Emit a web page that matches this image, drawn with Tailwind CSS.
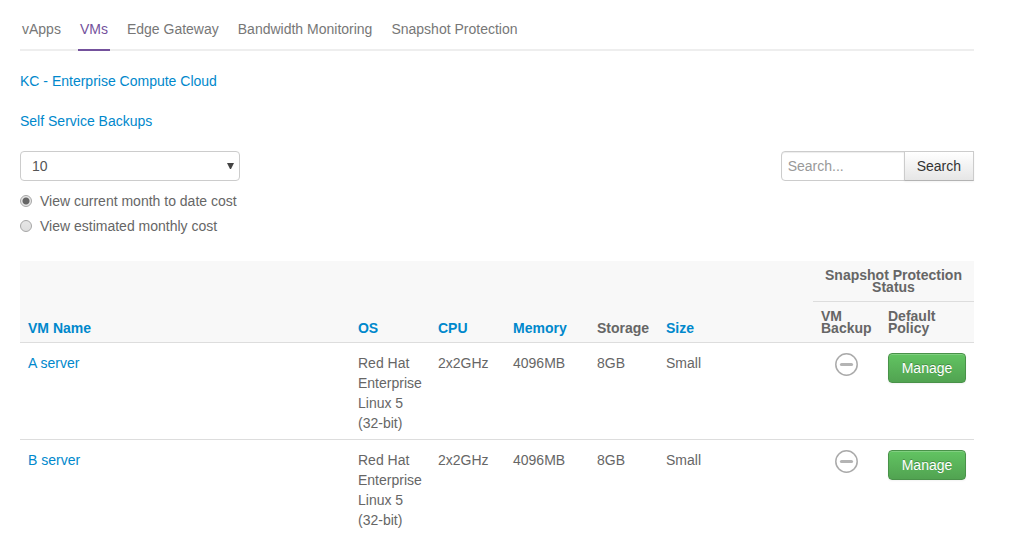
<!DOCTYPE html>
<html lang="en">
<head>
<meta charset="utf-8">
<meta name="viewport" content="width=device-width, initial-scale=1">
<title>VMs</title>
<script src="https://cdn.jsdelivr.net/npm/@tailwindcss/browser@4"></script>
</head>
<body class="bg-white pl-5 pr-[37px] font-['Liberation_Sans',Arial,sans-serif] text-[14px] leading-5 text-[#666]">
  <nav class="mt-[19px] flex gap-[15px] border-b-2 border-[#eee] text-[#777]">
    <a href="#" class="-mb-0.5 border-b-2 border-transparent px-0.5 pb-2.5">vApps</a>
    <a href="#" aria-current="page" class="-mb-0.5 border-b-2 border-[#74519c] px-0.5 pb-2.5 text-[#74519c]">VMs</a>
    <a href="#" class="-mb-0.5 border-b-2 border-transparent px-0.5 pb-2.5">Edge Gateway</a>
    <a href="#" class="-mb-0.5 border-b-2 border-transparent px-0.5 pb-2.5">Bandwidth Monitoring</a>
    <a href="#" class="-mb-0.5 border-b-2 border-transparent px-0.5 pb-2.5">Snapshot Protection</a>
  </nav>

  <main>
    <p class="mt-5"><a href="#" class="text-[#0088cc]">KC - Enterprise Compute Cloud</a></p>
    <p class="mt-5"><a href="#" class="text-[#0088cc]">Self Service Backups</a></p>

    <div class="mt-5 flex items-start justify-between">
      <div class="relative w-[220px]">
        <select aria-label="Rows per page" class="block h-[30px] w-full appearance-none rounded border border-[#ccc] bg-white px-[11px] text-[#555]">
          <option>10</option>
          <option>25</option>
          <option>50</option>
        </select>
        <svg class="pointer-events-none absolute top-3 right-1.5 h-1.5 w-[7px]" viewBox="0 0 7 6" fill="#444" aria-hidden="true"><path d="M0 0H7L4 6H3Z"/></svg>
      </div>
      <form class="flex">
        <input type="text" aria-label="Search" placeholder="Search..." class="h-[30px] w-[124px] rounded-l border border-[#ccc] bg-white px-1.5 text-[#555] shadow-[inset_0_1px_1px_rgba(0,0,0,0.075)] placeholder:text-[#999]">
        <button type="button" class="-ml-px h-[30px] border border-[#ccc] border-b-[#b3b3b3] bg-linear-to-b from-white to-[#e6e6e6] px-3 text-[#333] shadow-[inset_0_1px_0_rgba(255,255,255,0.2),0_1px_2px_rgba(0,0,0,0.05)]">Search</button>
      </form>
    </div>

    <div class="mt-2.5 flex flex-col items-start gap-[5px]">
      <label class="flex items-center gap-2">
        <input type="radio" name="cost" checked class="size-3 appearance-none rounded-full border border-[#a6a6a6] bg-linear-to-b from-[#e6e6e6] to-[#dedede] checked:bg-[radial-gradient(circle,#666_2px,#666_3px,#e6e6e6_4px)]">
        View current month to date cost
      </label>
      <label class="flex items-center gap-2">
        <input type="radio" name="cost" class="size-3 appearance-none rounded-full border border-[#a6a6a6] bg-linear-to-b from-[#e6e6e6] to-[#dedede] checked:bg-[radial-gradient(circle,#666_2px,#666_3px,#e6e6e6_4px)]">
        View estimated monthly cost
      </label>
    </div>

    <table class="mt-[25px] w-full table-fixed border-separate border-spacing-0 text-left">
      <colgroup>
        <col>
        <col class="w-20">
        <col class="w-[75px]">
        <col class="w-[84px]">
        <col class="w-[69px]">
        <col class="w-[155px]">
        <col class="w-[67px]">
        <col class="w-[94px]">
      </colgroup>
      <thead class="bg-[#f8f8f8] leading-3">
        <tr>
          <th rowspan="2" class="p-2 align-bottom"><a href="#" class="text-[#0088cc]">VM Name</a></th>
          <th rowspan="2" class="p-2 align-bottom"><a href="#" class="text-[#0088cc]">OS</a></th>
          <th rowspan="2" class="p-2 align-bottom"><a href="#" class="text-[#0088cc]">CPU</a></th>
          <th rowspan="2" class="p-2 align-bottom"><a href="#" class="text-[#0088cc]">Memory</a></th>
          <th rowspan="2" class="p-2 align-bottom">Storage</th>
          <th rowspan="2" class="p-2 align-bottom"><a href="#" class="text-[#0088cc]">Size</a></th>
          <th colspan="2" class="p-2 text-center">Snapshot Protection Status</th>
        </tr>
        <tr>
          <th class="border-t border-[#ddd] p-2 align-bottom">VM Backup</th>
          <th class="border-t border-[#ddd] p-2 align-bottom">Default Policy</th>
        </tr>
      </thead>
      <tbody class="align-top">
        <tr>
          <td class="border-t border-[#ddd] px-2 pt-2.5 pb-1.5"><a href="#" class="text-[#0088cc]">A server</a></td>
          <td class="border-t border-[#ddd] px-2 pt-2.5 pb-1.5">Red Hat Enterprise Linux 5 (32-bit)</td>
          <td class="border-t border-[#ddd] px-2 pt-2.5 pb-1.5">2x2GHz</td>
          <td class="border-t border-[#ddd] px-2 pt-2.5 pb-1.5">4096MB</td>
          <td class="border-t border-[#ddd] px-2 pt-2.5 pb-1.5">8GB</td>
          <td class="border-t border-[#ddd] px-2 pt-2.5 pb-1.5">Small</td>
          <td class="border-t border-[#ddd] px-2 pt-2.5 pb-1.5">
            <svg class="mx-auto size-[23px]" viewBox="0 0 23 23" fill="none" role="img" aria-label="No backup"><circle cx="11.5" cy="11.5" r="10.7" stroke="#aaa" stroke-width="1.5"/><path d="M6.500 11.500H16.500" stroke="#b4b4b4" stroke-width="3.200" stroke-linecap="round"/></svg>
          </td>
          <td class="border-t border-[#ddd] px-2 pt-2.5 pb-1.5"><button type="button" class="block h-[30px] w-full rounded border border-[#499249] bg-linear-to-b from-[#62c462] to-[#51a351] text-white shadow-[inset_0_1px_0_rgba(255,255,255,0.2),0_1px_2px_rgba(0,0,0,0.05)] [text-shadow:0_-1px_0_rgba(0,0,0,0.25)]">Manage</button></td>
        </tr>
        <tr>
          <td class="border-t border-[#ddd] px-2 pt-2.5 pb-1.5"><a href="#" class="text-[#0088cc]">B server</a></td>
          <td class="border-t border-[#ddd] px-2 pt-2.5 pb-1.5">Red Hat Enterprise Linux 5 (32-bit)</td>
          <td class="border-t border-[#ddd] px-2 pt-2.5 pb-1.5">2x2GHz</td>
          <td class="border-t border-[#ddd] px-2 pt-2.5 pb-1.5">4096MB</td>
          <td class="border-t border-[#ddd] px-2 pt-2.5 pb-1.5">8GB</td>
          <td class="border-t border-[#ddd] px-2 pt-2.5 pb-1.5">Small</td>
          <td class="border-t border-[#ddd] px-2 pt-2.5 pb-1.5">
            <svg class="mx-auto size-[23px]" viewBox="0 0 23 23" fill="none" role="img" aria-label="No backup"><circle cx="11.5" cy="11.5" r="10.7" stroke="#aaa" stroke-width="1.5"/><path d="M6.500 11.500H16.500" stroke="#b4b4b4" stroke-width="3.200" stroke-linecap="round"/></svg>
          </td>
          <td class="border-t border-[#ddd] px-2 pt-2.5 pb-1.5"><button type="button" class="block h-[30px] w-full rounded border border-[#499249] bg-linear-to-b from-[#62c462] to-[#51a351] text-white shadow-[inset_0_1px_0_rgba(255,255,255,0.2),0_1px_2px_rgba(0,0,0,0.05)] [text-shadow:0_-1px_0_rgba(0,0,0,0.25)]">Manage</button></td>
        </tr>
      </tbody>
    </table>
  </main>
</body>
</html>
